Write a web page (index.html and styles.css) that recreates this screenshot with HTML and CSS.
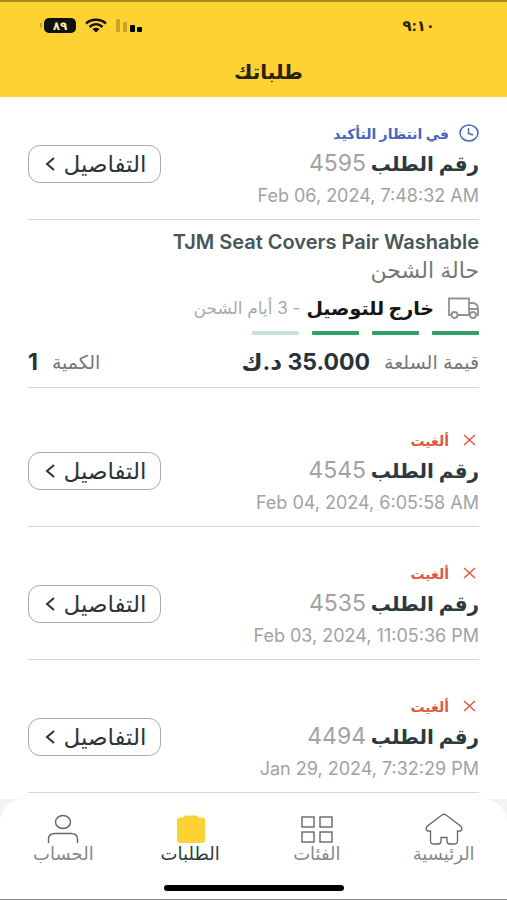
FILE: index.html
```html
<!DOCTYPE html>
<html lang="ar" dir="rtl">
<head>
<meta charset="utf-8">
<meta name="viewport" content="width=device-width, initial-scale=1">
<title>طلباتك</title>
<link rel="stylesheet" href="styles.css">
</head>
<body>
<header class="top">
  <div class="status-bar">
    <span class="clock">٩:١٠</span>
    <div class="indicators">
      <svg class="signal" viewBox="0 0 27 15" width="27" height="15" aria-hidden="true">
        <g fill="#c9a327"><rect x="0" y="1" width="4" height="13" rx="1"/><rect x="7" y="4" width="4" height="10" rx="1"/></g>
        <rect x="14" y="7" width="5" height="7" rx="1"/><rect x="21" y="9" width="5" height="5" rx="1"/>
      </svg>
      <svg class="wifi" viewBox="0 0 22 15" width="22" height="15" aria-hidden="true">
        <g fill="none" stroke="#111" stroke-width="2.4"><path d="M1 5.5C6.500 .5 15.500 .5 21 5.500"/><path d="M4.500 9C8.500 5.400 13.500 5.400 17.500 9"/></g>
        <path d="M7.500 11Q11 8.600 14.500 11L11 14.500z"/>
      </svg>
      <span class="battery">٨٩</span>
    </div>
  </div>
  <h1>طلباتك</h1>
</header>

<main class="orders">
  <article class="order">
    <p class="state pending">
      <svg viewBox="0 0 20 18" width="20" height="18" aria-hidden="true"><g fill="none" stroke="currentColor" stroke-width="1.5"><ellipse cx="10" cy="9" rx="9" ry="8"/><path d="M9.500 4V9.500L14 11"/></g></svg>
      <span>في انتظار التأكيد</span>
    </p>
    <div class="number-row">
      <h2>رقم الطلب <span>4595</span></h2>
      <button type="button">التفاصيل <svg viewBox="0 0 10 14" width="10" height="14" aria-hidden="true"><path d="M9 1L2 7l7 6" fill="none" stroke="currentColor" stroke-width="2"/></svg></button>
    </div>
    <time dir="ltr">Feb 06, 2024, 7:48:32 AM</time>
  </article>

  <section class="product">
    <h3 dir="ltr">TJM Seat Covers Pair Washable</h3>
    <p class="label">حالة الشحن</p>
    <p class="shipping">
      <svg viewBox="0 0 32 22" width="32" height="22" aria-hidden="true"><g fill="none" stroke="#929292" stroke-width="1.800"><path d="M4.500 18H2V1.500H22V18H10.500M22 6H26Q31 6.500 31 12V18H29.500M22 12H31M22 18H23"/><circle cx="7.500" cy="18" r="3"/><circle cx="26" cy="18" r="3"/></g></svg>
      <strong>خارج للتوصيل</strong>
      <span>- 3 أيام الشحن</span>
    </p>
    <div class="steps"><i></i><i></i><i></i><i class="todo"></i></div>
    <dl class="totals">
      <div><dt>قيمة السلعة</dt><dd>35.000 د.ك</dd></div>
      <div><dt>الكمية</dt><dd>1</dd></div>
    </dl>
  </section>

  <article class="order">
    <p class="state cancelled">
      <svg viewBox="0 0 20 18" width="20" height="18" aria-hidden="true"><path d="M5 4l11 10M16 4L5 14" fill="none" stroke="currentColor" stroke-width="1.500"/></svg>
      <span>ألغيت</span>
    </p>
    <div class="number-row">
      <h2>رقم الطلب <span>4545</span></h2>
      <button type="button">التفاصيل <svg viewBox="0 0 10 14" width="10" height="14" aria-hidden="true"><path d="M9 1L2 7l7 6" fill="none" stroke="currentColor" stroke-width="2"/></svg></button>
    </div>
    <time dir="ltr">Feb 04, 2024, 6:05:58 AM</time>
  </article>

  <article class="order">
    <p class="state cancelled">
      <svg viewBox="0 0 20 18" width="20" height="18" aria-hidden="true"><path d="M5 4l11 10M16 4L5 14" fill="none" stroke="currentColor" stroke-width="1.500"/></svg>
      <span>ألغيت</span>
    </p>
    <div class="number-row">
      <h2>رقم الطلب <span>4535</span></h2>
      <button type="button">التفاصيل <svg viewBox="0 0 10 14" width="10" height="14" aria-hidden="true"><path d="M9 1L2 7l7 6" fill="none" stroke="currentColor" stroke-width="2"/></svg></button>
    </div>
    <time dir="ltr">Feb 03, 2024, 11:05:36 PM</time>
  </article>

  <article class="order">
    <p class="state cancelled">
      <svg viewBox="0 0 20 18" width="20" height="18" aria-hidden="true"><path d="M5 4l11 10M16 4L5 14" fill="none" stroke="currentColor" stroke-width="1.500"/></svg>
      <span>ألغيت</span>
    </p>
    <div class="number-row">
      <h2>رقم الطلب <span>4494</span></h2>
      <button type="button">التفاصيل <svg viewBox="0 0 10 14" width="10" height="14" aria-hidden="true"><path d="M9 1L2 7l7 6" fill="none" stroke="currentColor" stroke-width="2"/></svg></button>
    </div>
    <time dir="ltr">Jan 29, 2024, 7:32:29 PM</time>
  </article>
</main>

<footer class="dock">
  <div class="sheet">
    <nav class="tabs">
      <a href="#home">
        <svg viewBox="0 0 38 32" width="38" height="32" aria-hidden="true"><path d="M17 2Q19 .5 21 2L35.500 13Q38 15.500 36 17.500Q35 18.500 32.500 18V28Q32.500 31 29 31H25Q22 31 22 28V24.500H16V28Q16 31 13 31H9Q5.500 31 5.500 28V18Q3 18.500 2 17.500Q0 15.500 2.500 13Z" fill="none" stroke="#666" stroke-width="1.300"/></svg>
        <span>الرئيسية</span>
      </a>
      <a href="#categories">
        <svg viewBox="0 0 38 32" width="38" height="32" aria-hidden="true"><g fill="none" stroke="#666" stroke-width="1.400"><rect x="4" y="4" width="12" height="10"/><rect x="22" y="4" width="12" height="10"/><rect x="4" y="19" width="12" height="10"/><rect x="22" y="19" width="12" height="10"/></g></svg>
        <span>الفئات</span>
      </a>
      <a href="#orders" class="current" aria-current="page">
        <svg viewBox="0 0 38 32" width="38" height="32" aria-hidden="true"><path d="M14 2.500H26L28 4.500H31Q34 4.500 34 7.500V27Q34 30 31 30H9Q6 30 6 27V7.500Q6 4.500 9 4.500H12Z" fill="#ffd233"/></svg>
        <span>الطلبات</span>
      </a>
      <a href="#account">
        <svg viewBox="0 0 38 32" width="38" height="32" aria-hidden="true"><g fill="none" stroke="#666" stroke-width="1.400"><ellipse cx="19" cy="9" rx="7.500" ry="6.500"/><path d="M4.500 30V26Q4.500 20.500 11 20.500H27Q33.500 20.500 33.500 26V30"/></g></svg>
        <span>الحساب</span>
      </a>
    </nav>
    <div class="home-bar"></div>
  </div>
</footer>
</body>
</html>
```
FILE: styles.css
```css
* { box-sizing: border-box; }

body {
  margin: 0;
  min-height: 100vh;
  display: flex;
  flex-direction: column;
  background: #fff;
  color: #2b3a3f;
  font-family: Inter, "DejaVu Sans", sans-serif;
}

h1, h2, h3, p, dl, dd { margin: 0; }

.top {
  border-top: 2px solid #ab8b1d;
  background: #ffd233;
  color: #2a210c;
}

.status-bar {
  display: flex;
  justify-content: space-between;
  align-items: center;
  height: 46px;
  padding: 0 72px 0 44px;
}

.clock { font-size: 15px; font-weight: 700; }

.indicators {
  display: flex;
  align-items: center;
  gap: 9px;
}

.battery {
  position: relative;
  width: 32px;
  border-radius: 5px;
  background: #111;
  color: #ffe9a0;
  font-size: 12px;
  font-weight: 700;
  line-height: 15px;
  text-align: center;
}

.battery::after {
  content: "";
  position: absolute;
  top: 5px;
  left: -4px;
  width: 2px;
  height: 5px;
  border-radius: 2px;
  background: #c9a327;
}

h1 {
  height: 49px;
  padding-left: 30px;
  font-size: 20px;
  font-weight: 700;
  line-height: 48px;
  text-align: center;
}

.orders {
  flex: 1;
  padding: 0 28px;
}

.order {
  padding: 34px 0 11px;
  border-bottom: 1px solid #d8d8d8;
}

.order:first-child { padding-top: 24px; }

.product + .order { padding-top: 40px; }

.state {
  display: flex;
  align-items: center;
  gap: 10px;
  height: 24px;
  font-size: 14px;
  font-weight: 700;
}

.pending { color: #4a66c0; }
.cancelled { color: #dd5942; }

.number-row {
  display: flex;
  justify-content: space-between;
  align-items: center;
}

h2 {
  height: 38px;
  font-size: 20px;
  font-weight: 700;
  line-height: 36px;
}

h2 span {
  color: #a2a2a2;
  font-size: 23px;
  font-weight: 400;
}

button {
  display: flex;
  justify-content: center;
  align-items: center;
  gap: 9px;
  width: 133px;
  height: 38px;
  padding: 0 0 0 2px;
  border: 1px solid #aaa;
  border-radius: 12px;
  background: #fff;
  color: #2b3538;
  font: 500 23px/30px Inter, "DejaVu Sans", sans-serif;
}

button svg { flex: none; }

time {
  display: block;
  color: #a2a2a2;
  font-size: 18px;
  line-height: 25px;
  text-align: right;
}

.product {
  padding: 10px 0 9px;
  border-bottom: 1px solid #d8d8d8;
}

h3 {
  color: #46565b;
  font-size: 20px;
  font-weight: 600;
  line-height: 24px;
  text-align: right;
}

.label {
  height: 34px;
  color: #777;
  font-size: 22px;
  line-height: 32px;
}

.shipping {
  display: flex;
  align-items: center;
  height: 40px;
}

.shipping strong {
  margin: 0 13px 0 6px;
  color: #151515;
  font-size: 19px;
}

.shipping span {
  color: #aaa;
  font-size: 17px;
}

.steps {
  display: flex;
  gap: 13px;
  padding-top: 3px;
}

.steps i {
  width: 47px;
  height: 4px;
  border-radius: 1px;
  background: #2fa262;
}

.steps .todo { background: #c5e4d1; }

.totals {
  display: flex;
  justify-content: space-between;
  padding-top: 11px;
}

.totals div {
  display: flex;
  align-items: center;
  gap: 14px;
  height: 32px;
}

dt {
  color: #777;
  font-size: 19px;
}

dd {
  color: #26343a;
  font-size: 23px;
  font-weight: 700;
}

.dock {
  border-bottom: 1px solid #888;
  background: #f3f3f3;
}

.sheet {
  padding: 14px 0 8px;
  border-radius: 24px 24px 0 0;
  background: #fff;
}

.tabs {
  display: grid;
  grid-template-columns: repeat(4, 1fr);
}

.tabs a {
  display: flex;
  flex-direction: column;
  align-items: center;
  color: #8a8a8a;
  font-size: 18px;
  line-height: 18px;
  text-decoration: none;
}

.tabs .current { color: #2b3a3f; }

.home-bar {
  width: 180px;
  height: 6px;
  margin: 22px auto 0;
  border-radius: 3px;
  background: #000;
}
```
